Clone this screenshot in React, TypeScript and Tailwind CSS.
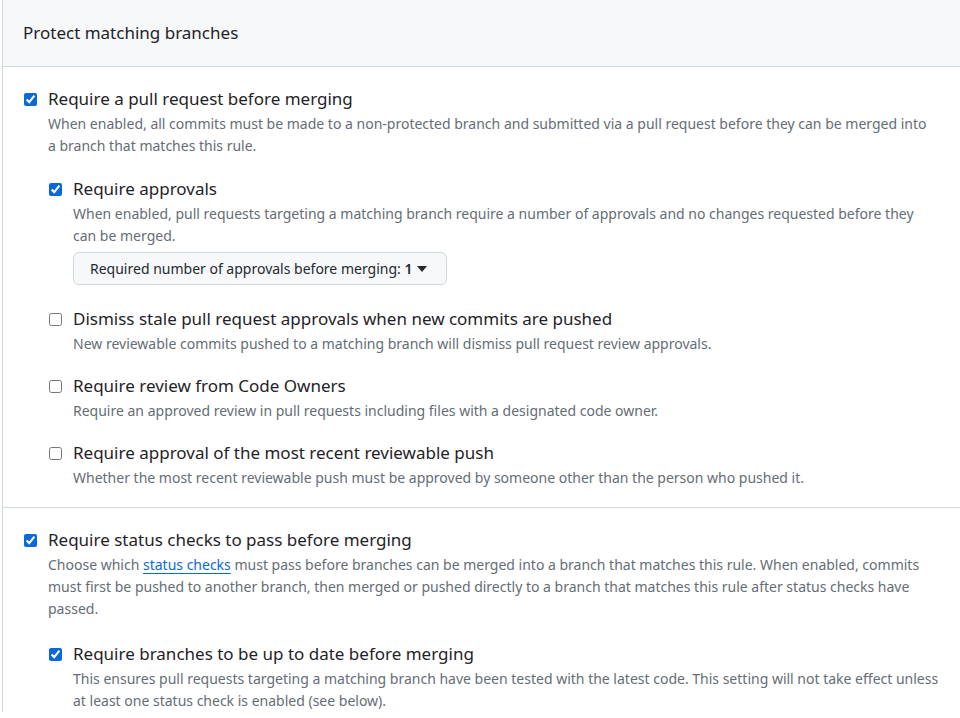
import React from "react";

type Rule = {
    label: string;
    checked: boolean;
    desc: React.ReactNode;
    extra?: React.ReactNode;
    childrenTop?: string;
    children?: Rule[];
};

function RuleItem({ rule, nested }: { rule: Rule; nested?: boolean }) {
    return (
        <div className="flex">
            {/* Checkbox column */}
            <div className={nested ? "w-[25px] shrink-0 pl-[1px] pt-[6px]" : "w-[24px] shrink-0 pt-[6px]"}>
                <input
                    type="checkbox"
                    defaultChecked={rule.checked}
                    className="m-0 block h-[13px] w-[13px] accent-[#0969da]"
                />
            </div>

            {/* Label, description and nested rules */}
            <div className="min-w-0 flex-1">
                <div className="text-[17px] leading-[24px] text-[#1f2328]">{rule.label}</div>
                <p className="mt-[2px] text-[14px] leading-[22px] text-[#656d76]">{rule.desc}</p>
                {rule.extra}
                {rule.children && (
                    <div className={`flex flex-col gap-[19px] ${rule.childrenTop ?? "mt-[20px]"}`}>
                        {rule.children.map((c) => (
                            <RuleItem key={c.label} rule={c} nested />
                        ))}
                    </div>
                )}
            </div>
        </div>
    );
}

const approvalsButton = (
    <button className="mb-[3px] mt-[5px] flex h-[33px] items-center gap-[8px] rounded-[6px] border border-[#d0d7de] bg-[#f6f8fa] pl-[16px] pr-[19px] text-[14px] text-[#24292f]">
        <span>
            Required number of approvals before merging: <span className="font-semibold">1</span>
        </span>
        <svg width="10" height="6" viewBox="0 0 10 6" className="-ml-[3px] mt-[1px]">
            <path d="M0 0h10L5 6z" fill="#24292f" />
        </svg>
    </button>
);

const pullRequestRule: Rule = {
    label: "Require a pull request before merging",
    checked: true,
    desc: "When enabled, all commits must be made to a non-protected branch and submitted via a pull request before they can be merged into a\u00a0branch that matches this rule.",
    children: [
        {
            label: "Require approvals",
            checked: true,
            desc: "When enabled, pull requests targeting a matching branch require a number of approvals and no changes requested before they can\u00a0be merged.",
            extra: approvalsButton,
        },
        {
            label: "Dismiss stale pull request approvals when new commits are pushed",
            checked: false,
            desc: "New reviewable commits pushed to a matching branch will dismiss pull request review approvals.",
        },
        {
            label: "Require review from Code Owners",
            checked: false,
            desc: "Require an approved review in pull requests including files with a designated code owner.",
        },
        {
            label: "Require approval of the most recent reviewable push",
            checked: false,
            desc: "Whether the most recent reviewable push must be approved by someone other than the person who pushed it.",
        },
    ],
};

const statusRule: Rule = {
    label: "Require status checks to pass before merging",
    checked: true,
    desc: (
        <>
            Choose which{" "}
            <a href="#" className="text-[#0969da] underline underline-offset-[3px]">
                status checks
            </a>{" "}
            must pass before branches can be merged into a branch that matches this rule. When enabled, commits must first be pushed to another branch, then merged or pushed directly to a branch that matches this rule after status checks have passed.
        </>
    ),
    childrenTop: "mt-[22px]",
    children: [
        {
            label: "Require branches to be up to date before merging",
            checked: true,
            desc: "This ensures pull requests targeting a matching branch have been tested with the latest code. This setting will not take effect unless at least one status check is enabled (see below).",
        },
    ],
};

export default function App() {
    return (
        <div
            className="h-[718px] w-[960px] overflow-hidden bg-white"
            style={{ fontFamily: '"Noto Sans", "Open Sans", sans-serif' }}
        >
            <div className="ml-[2px] w-[964px] border-l border-[#d0d7de]">
                {/* Header */}
                <div className="flex h-[67px] items-center border-b border-[#d0d7de] bg-[#f6f8fa] pl-[20px]">
                    <h2 className="text-[17px] text-[#1f2328]">Protect matching branches</h2>
                </div>

                {/* Sections */}
                <div className="border-b border-[#d0d7de] pb-[18px] pl-[21px] pr-[24px] pt-[20px]">
                    <RuleItem rule={pullRequestRule} />
                </div>
                <div className="pl-[21px] pr-[24px] pt-[20px]">
                    <RuleItem rule={statusRule} />
                </div>
            </div>
        </div>
    );
}
